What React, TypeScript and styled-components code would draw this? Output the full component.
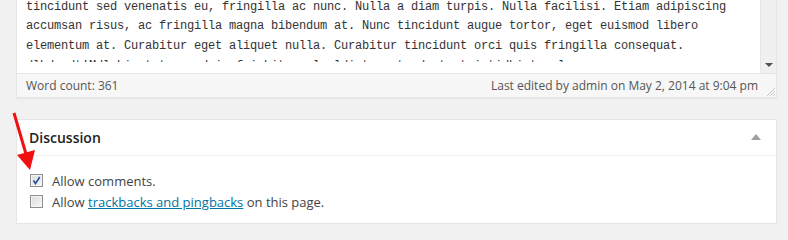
import React from "react";
import styled, { createGlobalStyle } from "styled-components";

const GlobalStyle = createGlobalStyle`
  html, body { margin: 0; padding: 0; background: #f1f1f1; overflow: hidden; }
  body { font-family: "Open Sans", "Liberation Sans", sans-serif; color: #444; }
`;

const Page = styled.div`
  padding: 0 11px 0 16px;
  display: flex;
  flex-direction: column;
  gap: 21px;
`;

const Editor = styled.div`
  margin-top: -10px;
  border: 1px solid #e5e5e5;
  background: #fff;
  box-shadow: 0 1px 1px rgba(0, 0, 0, 0.04);
`;

const EditorBody = styled.div`
  display: flex;
  height: 82px;
`;

const TextPane = styled.div`
  flex: 1;
  padding: 0 0 11px 9px;
  overflow: hidden;
`;

const TextClip = styled.div`
  height: 71px;
  padding-top: 6.5px;
  box-sizing: border-box;
  overflow: hidden;
  font-family: "Liberation Mono", "DejaVu Sans Mono", monospace;
  font-size: 12px;
  letter-spacing: -0.2px;
  line-height: 19.8px;
  color: #333;
  white-space: pre;
`;

const Scrollbar = styled.div`
  width: 16px;
  background: #f0f0f0;
  border-left: 1px solid #e6e6e6;
  display: flex;
  flex-direction: column;
  justify-content: flex-end;
  align-items: center;
  padding-bottom: 6px;
  box-sizing: border-box;
`;

const DownArrow = styled.span`
  width: 0;
  height: 0;
  border-left: 4px solid transparent;
  border-right: 4px solid transparent;
  border-top: 4px solid #505050;
`;

const StatusBar = styled.div`
  position: relative;
  display: flex;
  justify-content: space-between;
  align-items: center;
  height: 23px;
  padding: 0 18px 0 9px;
  border-top: 1px solid #e5e5e5;
  background: #f7f7f7;
  font-size: 12px;
  color: #555;
`;

const Grip = styled.svg`
  position: absolute;
  right: 0;
  bottom: 0;
`;

const Postbox = styled.div`
  border: 1px solid #e5e5e5;
  background: #fff;
  box-shadow: 0 1px 1px rgba(0, 0, 0, 0.04);
`;

const PostboxHeader = styled.div`
  display: flex;
  align-items: center;
  justify-content: space-between;
  height: 35px;
  padding: 0 15px 0 12px;
  border-bottom: 1px solid #eee;
`;

const Title = styled.h2`
  margin: 0;
  font-size: 14px;
  font-weight: 600;
  color: #222;
`;

const Toggle = styled.span`
  width: 0;
  height: 0;
  border-left: 5px solid transparent;
  border-right: 5px solid transparent;
  border-bottom: 6px solid #a0a0a0;
  margin-top: -1px;
`;

const Inside = styled.div`
  padding: 14px 12px 11px 13px;
  display: flex;
  flex-direction: column;
`;

const Row = styled.label`
  display: flex;
  align-items: center;
  gap: 9px;
  height: 21px;
  font-size: 13px;
  color: #444;
`;

const Box = styled.span`
  width: 11px;
  height: 11px;
  border: 1px solid #8e8f8f;
  box-shadow: inset 0 0 0 1px #f4f4f4;
  background: linear-gradient(135deg, #dcdcdc, #f6f6f6);
  display: flex;
  align-items: center;
  justify-content: center;
`;

const Link = styled.a`
  color: #0074a2;
  text-decoration: underline;
`;

const Arrow = styled.svg`
  position: absolute;
  left: 0;
  top: 0;
  pointer-events: none;
`;

const lines = [
  "tincidunt sed venenatis eu, fringilla ac nunc. Nulla a diam turpis. Nulla facilisi. Etiam adipiscing",
  "accumsan risus, ac fringilla magna bibendum at. Nunc tincidunt augue tortor, eget euismod libero",
  "elementum at. Curabitur eget aliquet nulla. Curabitur tincidunt orci quis fringilla consequat.",
  "dlbd edt'Mdl bi ut te qu d in fui bitur el uldi t e ut edu t ut i tidbi tu ulu",
];

const Check = ({ checked }: { checked: boolean }) => (
  <Box>
    {checked && (
      <svg width="9" height="9" viewBox="0 0 9 9">
        <path d="M1.5 4.5 L3.5 7.5 L7.8 1" fill="none" stroke="#2a4a9c" strokeWidth="1.6" />
      </svg>
    )}
  </Box>
);

export default function App() {
  return (
    <>
      <GlobalStyle />
      <Page>
        <Editor>
          <EditorBody>
            <TextPane>
              <TextClip>
                {lines.map((l, i) => (
                  <div key={i}>{l}</div>
                ))}
              </TextClip>
            </TextPane>
            <Scrollbar>
              <DownArrow />
            </Scrollbar>
          </EditorBody>
          <StatusBar>
            <span>Word count: 361</span>
            <span>Last edited by admin on May 2, 2014 at 9:04 pm</span>
            <Grip width="12" height="12" viewBox="0 0 12 12">
              <path d="M11 3 L3 11 M11 6 L6 11 M11 9 L9 11" stroke="#c8c8c8" strokeWidth="1" />
            </Grip>
          </StatusBar>
        </Editor>
        <Postbox>
          <PostboxHeader>
            <Title>Discussion</Title>
            <Toggle />
          </PostboxHeader>
          <Inside>
            <Row>
              <Check checked />
              <span>Allow comments.</span>
            </Row>
            <Row>
              <Check checked={false} />
              <span>
                Allow <Link href="#">trackbacks and pingbacks</Link> on this page.
              </span>
            </Row>
          </Inside>
        </Postbox>
      </Page>
      <Arrow width="60" height="180" viewBox="0 0 60 180">
        <line x1="14" y1="113" x2="26" y2="154" stroke="#f01010" strokeWidth="3" />
        <polygon points="17,155 35,150 30,170" fill="#f01010" />
      </Arrow>
    </>
  );
}
